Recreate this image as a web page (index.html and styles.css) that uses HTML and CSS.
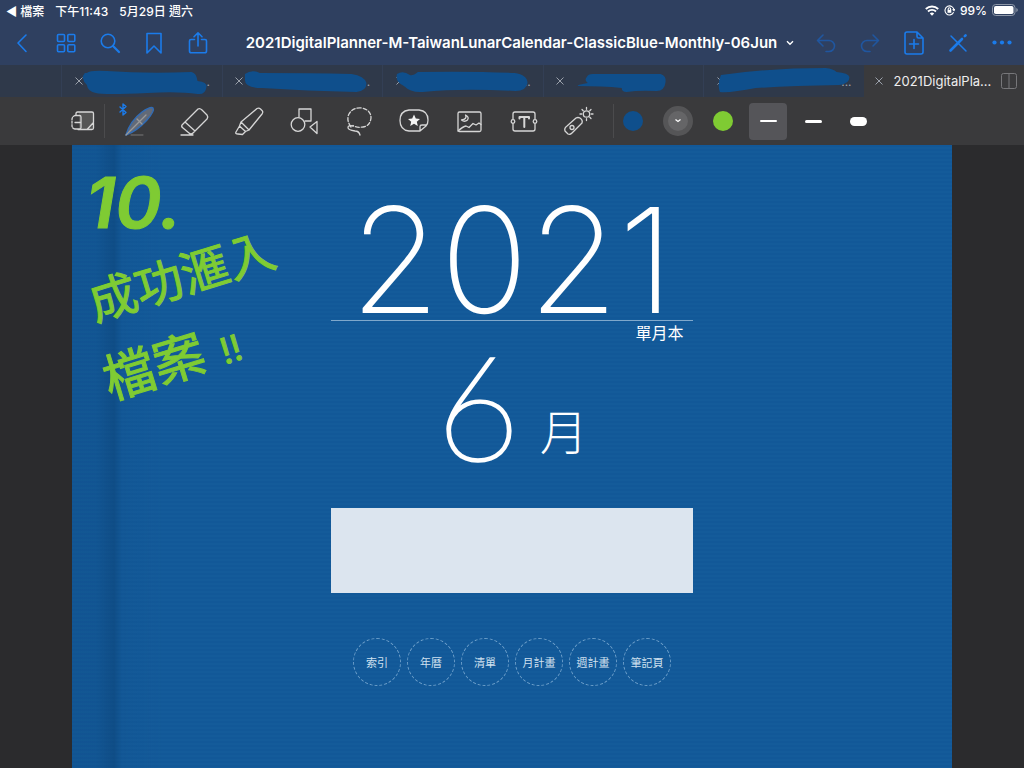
FILE: index.html
```html
<!DOCTYPE html>
<html lang="zh-Hant">
<head>
<meta charset="utf-8">
<meta name="viewport" content="width=device-width, initial-scale=1">
<title>2021DigitalPlanner</title>
<link rel="stylesheet" href="styles.css">
</head>
<body>
<header class="top">
  <div class="status">
    <a class="status-back" href="#">◀ 檔案</a>
    <span>下午11:43</span>
    <span>5月29日 週六</span>
    <span class="status-right">
      <svg width="14" height="11" viewBox="0 0 14 11" fill="none" stroke="#fff" stroke-width="1.9"><path d="M.8 4a9 9 0 0 1 12.4 0M3 6.500a5.800 5.800 0 0 1 8 0"/><path d="M7 10.800 4.800 8.500a3.200 3.200 0 0 1 4.400 0z" fill="#fff" stroke="none"/></svg>
      <svg width="11" height="11" viewBox="0 0 11 11" fill="none" stroke="#fff" stroke-width="1.100"><path d="M9.600 7.300A4.500 4.500 0 1 1 10 5.200M8.600 4.300 10 5.600l1-1.500M4.200 5V4a1.200 1.200 0 0 1 2.400 0v1"/><path d="M3.500 4.800h3.800v3H3.500z" fill="#fff" stroke="none"/></svg>
      <span>99%</span>
      <svg width="26" height="12" viewBox="0 0 26 12"><rect x=".5" y=".5" width="22.500" height="11" rx="3.200" fill="none" stroke="#8d97a8"/><rect x="2" y="2" width="19.500" height="8" rx="1.800" fill="#fff"/><path d="M24.300 4v4q1.500-.6 1.500-2t-1.500-2" fill="#8d97a8"/></svg>
    </span>
  </div>
  <nav class="nav">
    <div class="nav-group">
      <button class="nav-btn" aria-label="Back"><svg viewBox="0 0 24 24"><path d="M16 4 8 12l8 8.500"/></svg></button>
      <button class="nav-btn" aria-label="Thumbnails"><svg viewBox="0 0 24 24"><rect x="3.500" y="3.500" width="7" height="7" rx="1"/><rect x="13.800" y="3.500" width="7" height="7" rx="1"/><rect x="3.500" y="13.800" width="7" height="7" rx="1"/><rect x="13.800" y="13.800" width="7" height="7" rx="1"/></svg></button>
      <button class="nav-btn" aria-label="Search"><svg viewBox="0 0 24 24"><circle cx="10" cy="10" r="6.800"/><path d="m15 15 6 6" stroke-width="2.200"/></svg></button>
      <button class="nav-btn" aria-label="Bookmark"><svg viewBox="0 0 24 24"><path d="M5 2.500h14v19.500l-7-7-7 7z"/></svg></button>
      <button class="nav-btn" aria-label="Share"><svg viewBox="0 0 24 24"><path d="M8.500 8.500H5q-1.500 0-1.500 1.500v10q0 1.800 1.800 1.800h13.400q1.800 0 1.800-1.800V10q0-1.500-1.500-1.500h-3.500M12 15V2M8 5.800 12 1.800l4 4"/></svg></button>
    </div>
    <button class="title">2021DigitalPlanner-M-TaiwanLunarCalendar-ClassicBlue-Monthly-06Jun
      <svg width="8" height="6" viewBox="0 0 8 6" fill="none" stroke="#fff" stroke-width="1.400"><path d="m1 1.200 3 3 3-3"/></svg></button>
    <div class="nav-group">
      <button class="nav-btn dim" aria-label="Undo"><svg viewBox="0 0 24 24"><path d="M9 4 3.500 9.500 9 15M3.500 9.500H15a5.500 5.500 0 0 1 0 11h-3"/></svg></button>
      <button class="nav-btn dim" aria-label="Redo"><svg viewBox="0 0 24 24"><path d="m15 4 5.500 5.500L15 15M20.500 9.500H9a5.500 5.500 0 0 0 0 11h3"/></svg></button>
      <button class="nav-btn" aria-label="Add page"><svg viewBox="0 0 24 24"><path d="M15 1H5Q3 1 3 3v18q0 2 2 2h14q2 0 2-2V7zM15 1v4.500Q15 7 16.500 7H21M12 8.500v9M7.500 13h9"/></svg></button>
      <button class="nav-btn" aria-label="Read only"><svg viewBox="0 0 24 24"><path d="m5 5 15 15" stroke-width="1.500"/><path d="M16 8 4.500 19.500" stroke-width="2.600"/><path d="m18.800 5.200.8-.8" stroke-width="2.600"/></svg></button>
      <button class="nav-btn" aria-label="More"><svg viewBox="0 0 24 24"><g fill="currentColor" stroke="none"><circle cx="4.500" cy="11.500" r="2.100"/><circle cx="12" cy="11.500" r="2.100"/><circle cx="19.500" cy="11.500" r="2.100"/></g></svg></button>
    </div>
  </nav>
</header>

<div class="tabs">
  <div class="tab"><button class="close" aria-label="Close tab"><svg viewBox="0 0 8 8"><path d="m.5.5 7 7m0-7-7 7"/></svg></button><a class="tab-name" href="#">.</a>
    <svg class="ink" viewBox="0 0 160 32"><path d="M25 8Q28 5 45 6q40 3 85 1 5 1 6 9 10 1 9 6-1 8-9 7-20-3-50-1-45 2-52 0-8-1-9-8-7-7-2-12z"/></svg></div>
  <div class="tab"><button class="close" aria-label="Close tab"><svg viewBox="0 0 8 8"><path d="m.5.5 7 7m0-7-7 7"/></svg></button><a class="tab-name" href="#">.</a>
    <svg class="ink" viewBox="0 0 160 32"><path d="M22 9q7-5 15-1 50 0 92 1 13 2 15 9 0 8-10 9-50-1-95-4-17 0-17-8z"/></svg></div>
  <div class="tab"><button class="close" aria-label="Close tab"><svg viewBox="0 0 8 8"><path d="m.5.5 7 7m0-7-7 7"/></svg></button><a class="tab-name" href="#">..</a>
    <svg class="ink" viewBox="0 0 160 32"><path d="M14 9q6-4 13 1 3 1 8-3 55-1 97 1 13 2 13 10-1 8-12 8-55-3-93 1-12 1-19-6-9-4-7-12z"/></svg></div>
  <div class="tab"><button class="close" aria-label="Close tab"><svg viewBox="0 0 8 8"><path d="m.5.5 7 7m0-7-7 7"/></svg></button>
    <svg class="ink" viewBox="0 0 160 32"><path d="M43 12q1-3 6-3h68q6 2 5 8-1 9-9 9-18-1-30 1-5 0-5-4-20-2-44-2-2-1 10-3-4-3-1-6z"/></svg></div>
  <div class="tab"><button class="close" aria-label="Close tab"><svg viewBox="0 0 8 8"><path d="m.5.5 7 7m0-7-7 7"/></svg></button><a class="tab-name" href="#">...</a>
    <svg class="ink" viewBox="0 0 160 32"><path d="M17 10q50-7 105-7 8 1 11 4 12 1 13 5 0 7-10 8-50 1-84 3-25 5-36 4-3-8 1-17z"/></svg></div>
  <div class="tab active"><button class="close" aria-label="Close tab"><svg viewBox="0 0 8 8"><path d="m.5.5 7 7m0-7-7 7"/></svg></button><a class="tab-title" href="#">2021DigitalPla...</a>
    <button class="split" aria-label="Split view"><svg viewBox="0 0 16 16" width="16" height="16"><rect x=".5" y=".5" width="15" height="15" rx="2"/><path d="M8 .5v15"/></svg></button></div>
</div>

<div class="toolbar">
  <button class="tool zoom" aria-label="Zoom window"><svg viewBox="0 0 32 32"><path d="M12 7h14v17H12z" fill="#555" stroke="none"/><path d="M9 10V8.500Q9 7 10.500 7H25q1.500 0 1.500 1.500V23q0 1.500-1.500 1.500H11M26.500 17.500l-6.500 7M8 10.500h4.500Q14 10.500 14 12v10.500q0 1.500-1.500 1.500H8M8 17.500h6"/><path d="M8 10.500q-3 1-3 4v6q0 3 3 3.500" stroke-dasharray="2 1.500"/></svg></button>
  <i class="rule"></i>
  <button class="tool" aria-label="Pen"><svg viewBox="0 0 36 36"><path d="M5 32Q9 18 21 9q9-6 11-4 2 3-6 12Q16 28 5 32z" fill="#626a78" stroke="#2f6cb8" stroke-width="1.400"/><path d="M5 32 25 12m-9 4 5 5" stroke="#999"/><path d="M10 32h12" stroke="#888" stroke-width=".8"/><path d="m-1 4 6 5.500L2 12V1l3 2.500L-1 9" stroke="#1b7bea" stroke-width="1.400"/></svg></button>
  <button class="tool" aria-label="Eraser"><svg viewBox="0 0 36 36"><path d="m6 22 16-16q2-1 4 1l5 5q1.500 2 0 4L17 30q-2 2-4 0l-6-5q-2-1.500-1-3zM9 19l10 9M17 32H5"/></svg></button>
  <button class="tool" aria-label="Highlighter"><svg viewBox="0 0 36 36"><path d="M10 19 26 5.500q2-1 3.500.5l1.500 1.500q1.500 1.500 0 3.500L18 27zM10 19l-1.500 4 6 5.500 3.500-1.500M8.500 23 5 29q-1 2 2 2l4.500.5 3-3"/></svg></button>
  <button class="tool" aria-label="Shapes"><svg viewBox="0 0 36 36"><path d="M13 14V6h12v12h-6M24 24l7-5.500v12z"/><circle cx="12" cy="21.500" r="6.800"/></svg></button>
  <button class="tool" aria-label="Lasso"><svg viewBox="0 0 36 36"><path d="M10 24Q5 17 8 11q4-7 13-6 9 2 9 10-1 8-8 9-6 1-10-1.500" stroke-dasharray="4 2"/><path d="M12 23q-5-1-5 1.500t7 3.500q4 0 5 4"/></svg></button>
  <button class="tool" aria-label="Elements"><svg viewBox="0 0 36 36"><path d="M13 7h10q9 1 9 10 0 4-2 6l-6 5H13Q4 27 4 17.500 4 8 13 7zM24 28v-4.500q0-1.500 2-1.500h4"/><path d="m18 11.500 1.800 4 4.200.4-3.200 2.900 1 4.200-3.800-2.300-3.800 2.300 1-4.200-3.200-2.900 4.200-.4z" fill="#f4f4f4" stroke="none"/></svg></button>
  <button class="tool" aria-label="Image"><svg viewBox="0 0 36 36"><rect x="7" y="9" width="23" height="19.500" rx="1.500"/><path d="M7 28q5-4.500 8-5l3 1.500 4-4 3 1.500 3-2 2 1.500M14.500 12q2 4-4 5 3 2.500 6 0 2-3-2-5z"/></svg></button>
  <button class="tool" aria-label="Text"><svg viewBox="0 0 36 36"><path d="M7 16v-5q0-2 2-2h18q2 0 2 2v5M7 21v5q0 2 2 2h18q2 0 2-2v-5"/><circle cx="7" cy="18.500" r="1.800"/><circle cx="29" cy="18.500" r="1.800"/><path d="M13.500 15.500V14h9.500v1.500M18.300 14v10" stroke-width="2"/></svg></button>
  <button class="tool" aria-label="Laser pointer"><svg viewBox="0 0 36 36"><path d="m6 23 9-8q2-1 4 0 3 2 2 5L11 30q-2 2-4 1l-3-3q-1-3 2-5z"/><circle cx="11" cy="24.500" r="2"/><circle cx="25.500" cy="11" r="3.200"/><path d="M25.500 4.500v1.800M25.500 15.700v1.800M19 11h1.800M30.200 11H32M21 6.500l1.200 1.200M28.800 14.300l1.200 1.200M30 6.500l-1.200 1.200"/></svg></button>
  <i class="rule rule-gap"></i>
  <div class="pens">
    <button class="swatch" aria-label="Blue"><i class="dot blue"></i></button>
    <button class="swatch" aria-label="Choose colour"><i class="dot picker"><svg width="8" height="6" viewBox="0 0 8 6" fill="none" stroke="#fff" stroke-width="1.300"><path d="m1.500 1.500 2.500 2 2.500-2"/></svg></i></button>
    <button class="swatch" aria-label="Green"><i class="dot green"></i></button>
    <button class="swatch selected" aria-label="Thin"><i class="line thin"></i></button>
    <button class="swatch" aria-label="Medium"><i class="line medium"></i></button>
    <button class="swatch" aria-label="Thick"><i class="line thick"></i></button>
  </div>
</div>

<main class="canvas">
  <section class="page">
    <h1 class="year">2021</h1>
    <p class="edition">單月本</p>
    <h2 class="month"><span class="number">6</span><span class="unit">月</span></h2>
    <div class="label-box"></div>
    <nav class="links">
      <a href="#">索引</a><a href="#">年曆</a><a href="#">清單</a><a href="#">月計畫</a><a href="#">週計畫</a><a href="#">筆記頁</a>
    </nav>
    <div class="note">
      <p class="note-num">10.</p>
      <p class="note-one">成功滙入</p>
      <p class="note-two">檔案<span>!!</span></p>
    </div>
  </section>
</main>
</body>
</html>
```
FILE: styles.css
```css
* { box-sizing: border-box; }
body {
  margin: 0;
  min-height: 100vh;
  display: flex;
  flex-direction: column;
  background: #2b2b2d;
  color: #fff;
  font-family: Inter, "Noto Sans CJK TC", sans-serif;
}
h1, h2, p { margin: 0; font-weight: 400; }
a { color: inherit; text-decoration: none; }
button { margin: 0; padding: 0; border: 0; background: none; color: inherit; font: inherit; display: flex; align-items: center; justify-content: center; }

.top { background: #2f4060; }
.status { display: flex; align-items: center; gap: 11px; height: 20px; padding: 0 6px; font-size: 12px; font-weight: 500; }
.status-right { margin-left: auto; display: flex; align-items: center; gap: 5px; }

.nav { display: flex; justify-content: space-between; height: 45px; }
.nav-group { display: flex; flex: none; }
.nav-btn { width: 44px; color: #1b7bea; }
.nav-btn svg { width: 24px; height: 24px; fill: none; stroke: currentColor; stroke-width: 1.6; stroke-linejoin: round; stroke-linecap: round; }
.dim { color: #20569f; }
.title { gap: 9px; padding-left: 16px; font-size: 15px; font-weight: 600; white-space: nowrap; }

.tabs { display: grid; grid-template-columns: repeat(6, minmax(0, 1fr)); height: 32px; padding-left: 6%; background: #2f394a; }
.tab { position: relative; display: flex; align-items: center; padding: 0 12px; border-left: 1px solid #333f55; }
.close { flex: none; width: 9px; height: 20px; }
.close svg { width: 8px; height: 8px; fill: none; stroke: #9ba1ab; }
.tab-name { margin-left: auto; font-size: 12px; color: #9ba1ab; }
.ink { position: absolute; inset: 0; width: 100%; height: 100%; fill: #0f4f8c; pointer-events: none; }
.active { padding: 0 7px 0 10px; background: #3a3a3c; border-color: #3a3a3c; }
.tab-title { margin-left: 10px; font-size: 13px; color: #eee; white-space: nowrap; }
.split { margin-left: auto; }
.split svg { fill: none; stroke: #77777a; }

.toolbar { display: flex; align-items: center; height: 48px; padding-left: 62px; background: #3a3a3c; }
.tool { width: 55px; height: 48px; }
.tool svg { width: 36px; height: 36px; overflow: visible; fill: none; stroke: #d6d6d6; stroke-width: 1.3; stroke-linejoin: round; stroke-linecap: round; }
.zoom { width: 42px; }
.zoom svg { width: 32px; height: 32px; }
.rule { width: 1px; height: 34px; margin-right: 6px; background: #4b4b4d; }
.rule-gap { margin: 0 0 0 7px; }
.pens { display: flex; gap: 7px; }
.swatch { width: 38px; height: 37px; border-radius: 4px; }
.selected { background: #555559; }
.dot { display: flex; align-items: center; justify-content: center; width: 20px; height: 20px; border-radius: 50%; }
.blue { background: #0f4f8c; }
.green { background: #7fcb33; }
.picker { width: 30px; height: 30px; background: #656567; border: 5px solid #555557; }
.line { width: 17px; background: #fff; border-radius: 5px; }
.thin { height: 2px; }
.medium { height: 3px; }
.thick { height: 9px; }

.canvas { flex: 1; display: flex; padding: 0 7%; }
.page {
  position: relative;
  flex: 1;
  display: flex;
  flex-direction: column;
  align-items: center;
  padding: 55px 0 40px;
  background:
    linear-gradient(90deg, #0a3a6a22 0, #0a3a6a22 24px, #0a3a6a66 42px, #0a3a6a11 50px, transparent 90px),
    repeating-linear-gradient(180deg, #125898 0 2px, #145b9a 2px 4px);
}
.year { width: 41%; border-bottom: 1px solid #7fa8cc; font-size: 146px; line-height: 120px; font-weight: 200; text-align: center; }
.edition { width: 41%; padding-right: 9px; font-size: 16px; line-height: 24px; text-align: right; }
.month { display: flex; align-items: flex-end; gap: 20px; font-size: 144px; line-height: 120px; }
.number { font-family: Lato, sans-serif; font-weight: 100; -webkit-text-stroke: 3px #fff; }
.unit { margin-bottom: 8px; font-size: 48px; line-height: 48px; font-weight: 300; }
.label-box { width: 41%; height: 85px; margin-top: 43px; background: #dce5ef; }
.links { display: flex; gap: 6px; margin-top: 45px; }
.links a { display: flex; align-items: center; justify-content: center; width: 48px; height: 48px; border: 1px dashed #6d9fca; border-radius: 50%; font-size: 11px; color: #cfe0ef; white-space: nowrap; }

.note { position: absolute; top: 14px; left: 14px; color: #7fcb33; white-space: nowrap; -webkit-text-stroke: 1px #7fcb33; }
.note .note-num { font-size: 70px; line-height: 88px; font-weight: 600; font-style: italic; }
.note-one, .note-two { font-size: 48px; line-height: 60px; transform: rotate(-17deg); }
.note-two { margin-top: 22px; padding-left: 16px; font-size: 52px; }
.note-two span { padding-left: 16px; font-size: 36px; }
```
